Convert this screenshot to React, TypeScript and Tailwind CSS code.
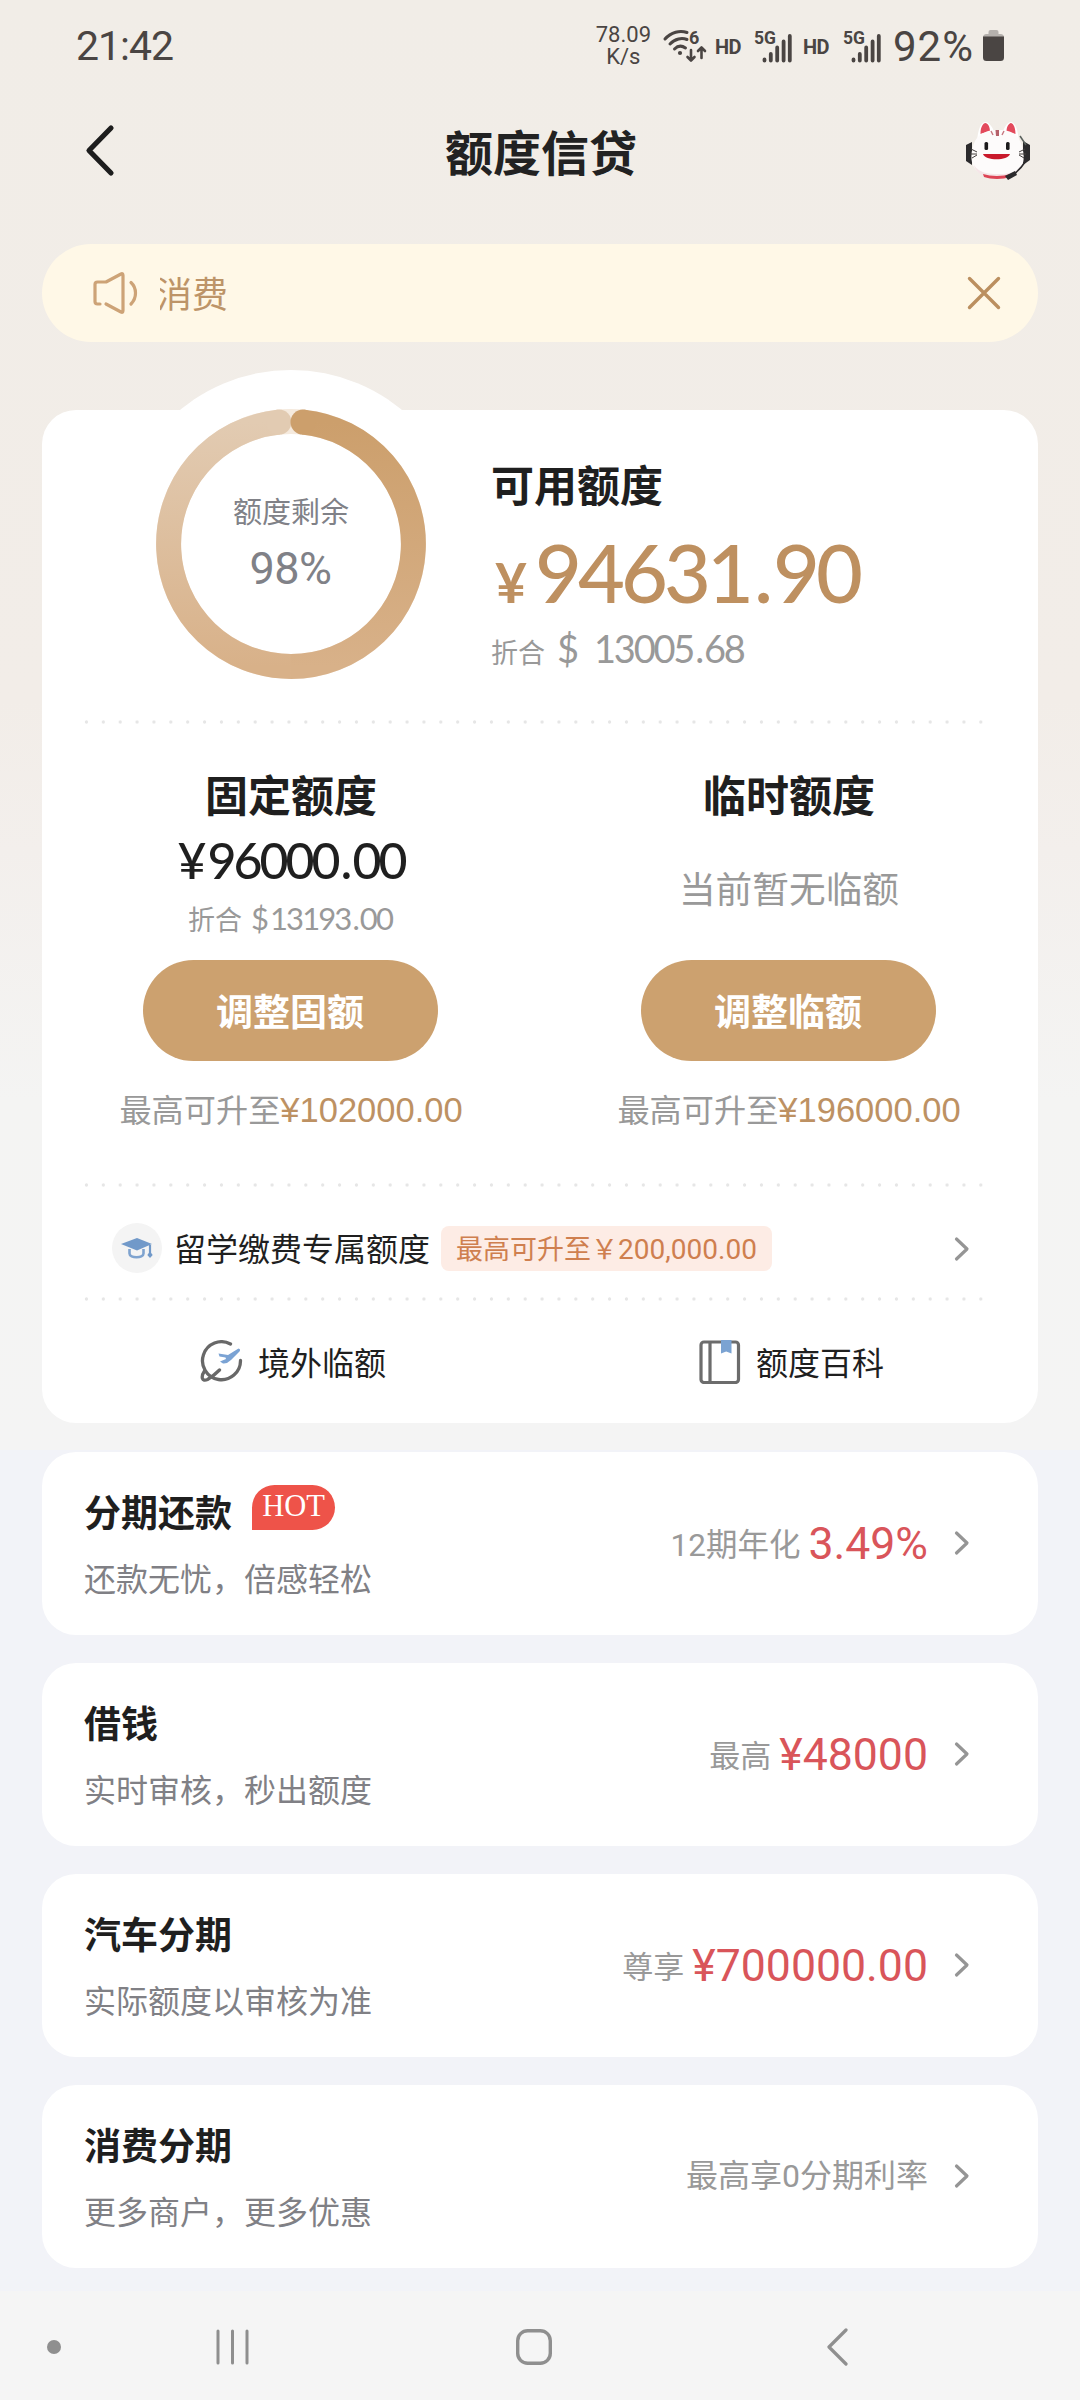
import React from 'react';

interface Offer {
  title: string;
  desc: string;
  hot?: boolean;
  label: string;
  labelClass: string;
  value?: string;
}

const offers: Offer[] = [
  { title: '分期还款', desc: '还款无忧，倍感轻松', hot: true, label: '12期年化', labelClass: 'text-[31.500px]', value: '3.49%' },
  { title: '借钱', desc: '实时审核，秒出额度', label: '最高', labelClass: 'text-[31px]', value: '¥48000' },
  { title: '汽车分期', desc: '实际额度以审核为准', label: '尊享', labelClass: 'text-[31px]', value: '¥700000.00' },
  { title: '消费分期', desc: '更多商户，更多优惠', label: '最高享0分期利率', labelClass: 'text-[32px]' },
];

const Chevron: React.FC = () => (
  <svg width="16" height="26" viewBox="0 0 16 26" fill="none" stroke="#959595" strokeWidth="3.2" strokeLinecap="round" strokeLinejoin="round">
    <path d="M2.5 3 L13 13 L2.5 23" />
  </svg>
);

const Dots: React.FC = () => (
  <div className="ml-[36px] mr-[54px] h-[4px] bg-[radial-gradient(circle,#e6e6e6_1.3px,transparent_2px)] bg-[length:16.88px_4px] bg-repeat-x" />
);

const WifiIcon: React.FC = () => (
  <svg className="overflow-visible" width="44" height="34" viewBox="0 0 44 34" fill="none" stroke="#4a4543" strokeWidth="3" strokeLinecap="round">
    <path d="M2 10 C8 3 17 1 24 3.500" />
    <path d="M7 15 C12 9.500 19 8.500 24 10.500" />
    <path d="M11.500 20 C15 16.500 19 16.500 22.500 19" />
    <circle cx="17" cy="24" r="2.100" fill="#4a4543" stroke="none" />
    <path d="M28 21 V31 M24.500 28 L28 31.500 L31.500 28" strokeWidth="2.600" strokeLinejoin="round" />
    <path d="M38.500 29 V19 M35 22 L38.500 18.500 L42 22" strokeWidth="2.600" strokeLinejoin="round" />
    <text x="26" y="15" fontSize="18" fontWeight="700" fontFamily="Roboto, sans-serif" fill="#4a4543" stroke="none">6</text>
  </svg>
);

const SignalIcon: React.FC = () => (
  <svg className="overflow-visible" width="40" height="34" viewBox="0 0 40 34" fill="none" stroke="#4a4543" strokeWidth="3.800" strokeLinecap="round">
    <text x="0" y="14" fontSize="17.500" fontWeight="700" fontFamily="Roboto, sans-serif" fill="#4a4543" stroke="none">5G</text>
    <path d="M10.500 29.500 V30.500 M16.800 24 V30.500 M23.200 17.500 V30.500 M29.600 11.500 V30.500 M35.800 6 V30.500" />
  </svg>
);

const StatusBar: React.FC = () => (
  <div className="flex h-[92px] items-center pl-[76px] pr-[76px] font-['Roboto',sans-serif] text-[#4a4543]">
    <span className="text-[41px] leading-none tracking-[-1px]">21:42</span>
    <div className="ml-auto flex items-center">
      <div className="mr-[12px] text-center text-[22px] leading-[22px]">
        78.09
        <br />
        K/s
      </div>
      <WifiIcon />
      <span className="ml-[8px] mt-[2px] w-[28px] text-[20px] font-bold leading-[24px] tracking-[-0.500px]">HD</span>
      <span className="ml-[11px] mt-[2px]"><SignalIcon /></span>
      <span className="ml-[9px] mt-[2px] w-[28px] text-[20px] font-bold leading-[24px] tracking-[-0.500px]">HD</span>
      <span className="ml-[12px] mt-[2px]"><SignalIcon /></span>
      <span className="ml-[10px] mt-[2px] w-[84px] text-[42px] leading-[50px] tracking-[1px]">92%</span>
      <svg className="ml-[6px]" width="21" height="32" viewBox="0 0 21 32">
        <rect x="5.500" y="0" width="10" height="8" rx="2" fill="#b5b1ad" />
        <rect x="0" y="4" width="21" height="10" rx="3.500" fill="#b5b1ad" />
        <path d="M0 6.500 H21 V27.500 A3.500 3.500 0 0 1 17.500 31 H3.500 A3.500 3.500 0 0 1 0 27.500 Z" fill="#4a4543" />
      </svg>
    </div>
  </div>
);

// customer service cat with a headset
const Mascot: React.FC = () => (
  <svg width="66" height="60" viewBox="0 0 66 60">
    <path d="M1 24 L7 21 V44 L1 40 Z" fill="#2b2a2c" />
    <path d="M65 24 L58 20 V44 L65 39 Z" fill="#2b2a2c" />
    <path d="M55 15 L61 24" stroke="#59605c" strokeWidth="1.500" />
    <path d="M12 21 C13 7 16 1 21 1 C25 2 28 7 30 13 Z" fill="#fff" />
    <path d="M15.500 13 C15.500 6 18 2 20.500 2 C24 3 25 7 25 11 C21 11 18 12 15.500 13 Z" fill="#e34a5c" />
    <path d="M37 13 C39 7 42 1 46.500 1 C50 2 53 8 54 21 Z" fill="#fff" />
    <path d="M41.500 11 C41.500 6 43.500 2.500 46 2 C49 2.500 50.500 8 50.500 13 C47 12 44 11 41.500 11 Z" fill="#e34a5c" />
    <path d="M10 20 C15 11 24 9 33 9 C43 9 51 11 55 20 C60 31 61 46 51 52 C42 57 24 57 15 52 C4 46 5 31 10 20 Z" fill="#fdfbfb" />
    <path d="M9 44 C14 52 23 53 33 53 C44 53 52 51 57 44 C55 50 49 55 42 56 H23 C15 54 10 50 9 44 Z" fill="#f5e6e8" />
    <path d="M18 53 C26 55.500 38 55.500 45 53 V56 C38 58.500 26 58.500 19 56 Z" fill="#dd4455" />
    <path d="M30.500 9 H34 L34 15 H31 Z" fill="#b5606a" />
    <path d="M26 10 L28 14 M39 10 L37 14" stroke="#c77780" strokeWidth="1.400" />
    <rect x="19.500" y="21" width="3.600" height="8" rx="1.500" fill="#1d1b1c" />
    <rect x="41" y="21" width="3.600" height="8" rx="1.500" fill="#1d1b1c" />
    <path d="M18 33 H45 C43 40 20 40 18 33 Z" fill="#c9192b" />
    <path d="M6 28 L12 31 M5 33 H12 M7 37 L12 34 M60 28 L54 31 M61 33 H54 M59 37 L54 34" stroke="#44403f" strokeWidth="1" />
    <path d="M60 41 C57 46 53 50 48 54" stroke="#2b2a2c" strokeWidth="1.600" fill="none" />
    <path d="M40 55 L50 50 L52 54 L43 59 Z" fill="#2b2a2c" />
  </svg>
);

const Header: React.FC = () => (
  <div className="flex h-[120px] items-center justify-between pl-[84px] pr-[49px]">
    <svg className="mt-[-2px]" width="66" height="54" viewBox="0 0 66 54" fill="none" stroke="#1d1d1d" strokeWidth="5.200" strokeLinecap="round" strokeLinejoin="round">
      <path d="M27 4 L5 26.500 L27 49" />
    </svg>
    <h1 className="mr-[33px] mt-[-5px] text-[48px] font-bold leading-none text-[#222]">额度信贷</h1>
    <span className="mt-[-3px]"><Mascot /></span>
  </div>
);

const Notice: React.FC = () => (
  <div className="mt-[32px] flex h-[98px] items-center rounded-full bg-[#fff8e7] pl-[50px] pr-[37px] text-[#bd9468]">
    <svg width="48" height="44" viewBox="0 0 48 44" fill="none" stroke="#cda377" strokeWidth="3.200" strokeLinecap="round" strokeLinejoin="round">
      <path d="M8 33 H5.500 Q3 33 3 30.500 V13.500 Q3 11 5.500 11 H14 L29 3 Q31 2 31 4.500 V39.500 Q31 42 29 41 L14 33" />
      <path d="M39 11.500 C45 17 45 27 39 33" />
    </svg>
    <div className="mb-[3px] ml-[20px] flex flex-1 overflow-hidden text-[36px] leading-[54px]">
      <span className="ml-[-4px]">消费</span>
    </div>
    <svg width="34" height="34" viewBox="0 0 34 34" stroke="#bb8f5f" strokeWidth="3.400" strokeLinecap="round">
      <path d="M2.500 2.500 L31.500 31.500 M31.500 2.500 L2.500 31.500" />
    </svg>
  </div>
);

const Ring: React.FC = () => (
  <div className="absolute left-[75px] top-[-40px] flex h-[348px] w-[348px] items-center justify-center rounded-full bg-white">
    <svg className="absolute left-[39px] top-[39px]" width="270" height="270" viewBox="0 0 270 270" fill="none" strokeWidth="25">
      <defs>
        <linearGradient id="right" x1="0" y1="0" x2="0" y2="1">
          <stop offset="0" stopColor="#cc9f6c" />
          <stop offset="1" stopColor="#d8b189" />
        </linearGradient>
        <linearGradient id="left" x1="0" y1="0" x2="0" y2="1">
          <stop offset="0" stopColor="#e2cbb2" />
          <stop offset="1" stopColor="#d8b189" />
        </linearGradient>
      </defs>
      <circle cx="135" cy="135" r="122.500" stroke="#f5eade" />
      <path d="M135 257.500 A122.500 122.500 0 0 1 123 13.100" stroke="url(#left)" />
      <path d="M147 13.100 A122.500 122.500 0 0 1 135 257.500" stroke="url(#right)" />
      <circle cx="123" cy="13.100" r="12.500" fill="#e2cbb2" stroke="none" />
      <circle cx="147" cy="13.100" r="12.500" fill="#cc9f6c" stroke="none" />
    </svg>
    <div className="relative mb-[4px] flex flex-col items-center text-[#808187]">
      <span className="text-[29px] leading-[40px]">额度剩余</span>
      <span className="mr-[1px] mt-[14px] font-['Roboto',sans-serif] text-[45px] leading-[50px] tracking-[-0.500px]">98%</span>
    </div>
  </div>
);

// amount with a widened decimal point
const Amount: React.FC<{ value: string; dotClass: string }> = ({ value, dotClass }) => {
  const [whole, cents] = value.split('.');
  return (
    <>
      {whole}
      <span className={dotClass}>.</span>
      {cents}
    </>
  );
};

const Available: React.FC = () => (
  <div className="relative h-[310px]">
    <Ring />
    <div className="flex flex-col pl-[449px] pt-[48px]">
      <h2 className="text-[43px] font-bold leading-[50px] text-[#1f1f1f]">可用额度</h2>
      <div className="mt-[22px] flex items-baseline font-['Lato',sans-serif] font-medium leading-[84px] text-[#be9060]">
        <span className="ml-[4px] w-[40px] text-[55px] font-bold">¥</span>
        <span className="text-[81px] tracking-[-4px] [font-kerning:none]">
          <Amount value="94631.90" dotClass="mx-[4px]" />
        </span>
      </div>
      <div className="flex items-baseline font-['Lato',sans-serif] leading-[48px] text-[#999]">
        <span className="w-[66px] font-['Noto_Sans_CJK_SC',sans-serif] text-[27px]">折合</span>
        <span className="w-[37px] text-[38px]">$</span>
        <span className="text-[38px] tracking-[-2.200px] [font-kerning:none]">
          <Amount value="13005.68" dotClass="mx-[2px]" />
        </span>
      </div>
    </div>
  </div>
);

interface LimitProps {
  title: string;
  button: string;
  max: string;
  children: React.ReactNode;
}

const Limit: React.FC<LimitProps> = ({ title, button, max, children }) => (
  <div className="flex w-1/2 flex-col items-center pt-[44px]">
    <h2 className="text-[43px] font-bold leading-[50px] text-[#1f1f1f]">{title}</h2>
    <div className="flex h-[142px] flex-col items-center">{children}</div>
    <button className="mr-[2px] h-[101px] w-[295px] rounded-full bg-[#cca16f] pb-[1px] text-[37px] font-bold leading-none text-white">{button}</button>
    <div className="mt-[25px] flex items-baseline text-[32.200px] leading-[44px] text-[#999]">
      最高可升至
      <span className="font-['Liberation_Sans',sans-serif] text-[34.500px] text-[#bd9163]">{max}</span>
    </div>
  </div>
);

const CreditCard: React.FC = () => (
  <div className="mt-[68px] h-[1013px] rounded-[34px] bg-white">
    <Available />
    <Dots />
    <div className="flex h-[459px]">
      <Limit title="固定额度" button="调整固额" max="¥102000.00">
        <div className="mt-[14px] font-['Lato',sans-serif] text-[50px] font-medium leading-[56px] tracking-[-3px] text-[#1f1f1f] [font-kerning:none]">
          <span className="mr-[4px]">¥</span>
          <Amount value="96000.00" dotClass="mx-[3px]" />
        </div>
        <div className="mr-[2px] mt-[10px] flex items-baseline text-[27px] leading-[40px] text-[#999]">
          折合
          <span className="ml-[9px] font-['Lato',sans-serif] text-[31px] tracking-[-1.900px] [font-kerning:none]">
            <span className="mr-[3px]">$</span>
            <Amount value="13193.00" dotClass="mx-[2px]" />
          </span>
        </div>
      </Limit>
      <Limit title="临时额度" button="调整临额" max="¥196000.00">
        <div className="mt-[44px] text-[36.700px] leading-[50px] text-[#999]">当前暂无临额</div>
      </Limit>
    </div>
    <Dots />
    <div className="flex h-[110px] items-center pl-[70px] pr-[68px] pt-[14px]">
      <div className="mb-[2px] flex h-[50px] w-[50px] items-center justify-center rounded-full bg-[#f4f4f4]">
        <svg className="mt-[2px]" width="32" height="22" viewBox="0 0 32 22" fill="none">
          <path d="M0 6 L16 0 L31 6 L16 12.500 Z" fill="#7199c9" />
          <path d="M8.500 11 V15.500 C8.500 20.500 22.500 20.500 22.500 15.500 V11" stroke="#7fa3cf" strokeWidth="2.600" />
          <path d="M29 7 V16" stroke="#7199c9" strokeWidth="2.200" />
          <path d="M29 13.500 L31.700 17 L29 20 L26.300 17 Z" fill="#7199c9" />
        </svg>
      </div>
      <span className="mb-[4px] ml-[12px] text-[32px] leading-none text-[#1f1f1f]">留学缴费专属额度</span>
      <div className="mb-[1px] ml-[11px] flex h-[45px] w-[331px] items-baseline justify-center rounded-[8px] bg-[#fdece5] text-[27px] leading-[43px] text-[#cf7f4f]">
        最高可升至￥<span className="font-['Roboto',sans-serif] text-[28px]">200,000.00</span>
      </div>
      <span className="mb-[1px] ml-auto"><Chevron /></span>
    </div>
    <Dots />
    <div className="flex h-[122px] items-center text-[32px] leading-none text-[#1f1f1f]">
      <div className="flex w-1/2 items-center pl-[158px]">
        <svg width="44" height="44" viewBox="0 0 44 44" fill="none" strokeWidth="3.300" strokeLinecap="round" strokeLinejoin="round">
          <path d="M30.500 4 A19 19 0 1 0 40.500 20.500" stroke="#686868" />
          <path d="M4.500 31 C0.500 37 2 42 7.500 39.500 C12 37 16 33.500 19.500 30" stroke="#686868" />
          <path d="M38.500 8.500 Q41 9 39.500 11.500 L31 20 Q27 24 23 23.500 L20 21.500 L26 19 L25.500 17.500 L19.500 16.500 L18.500 13.500 L28 15 Z" fill="#7ba3d4" />
        </svg>
        <span className="mb-[3px] ml-[14px]">境外临额</span>
      </div>
      <div className="flex w-1/2 items-center pl-[159px]">
        <svg width="42" height="44" viewBox="0 0 42 44" fill="none" stroke="#6c6c6c" strokeWidth="3.200">
          <rect x="2" y="2" width="37.500" height="40.500" rx="3" />
          <path d="M11 2 V42" />
          <path d="M22 0 H32.500 V13.500 L27.200 11.500 L22 13.500 Z" fill="#7ba3d2" stroke="none" />
        </svg>
        <span className="mb-[3px] ml-[15px]">额度百科</span>
      </div>
    </div>
  </div>
);

const OfferCard: React.FC<{ offer: Offer }> = ({ offer }) => (
  <div className="flex h-[183px] items-center rounded-[34px] bg-white pl-[42px] pr-[68px]">
    <div className="flex h-full flex-col pt-[35px]">
      <div className="flex h-[48px] items-center">
        <h3 className="text-[37px] font-bold leading-none text-[#1f1f1f]">{offer.title}</h3>
        {offer.hot && (
          <span className="mb-[8px] ml-[20px] flex h-[45px] w-[83px] items-center justify-center rounded-[23px] rounded-bl-none bg-[#ee5349] pb-[1px] font-['Liberation_Serif',serif] text-[30.500px] leading-none text-white">
            HOT
          </span>
        )}
      </div>
      <p className="mt-[21px] text-[32px] leading-[42px] text-[#808085]">{offer.desc}</p>
    </div>
    <div className="mb-[1px] ml-auto flex items-baseline font-['Roboto','Noto_Sans_CJK_SC',sans-serif] leading-[52px] text-[#999]">
      <span className={offer.labelClass}>{offer.label}</span>
      {offer.value && <span className="ml-[8px] translate-y-[3px] text-[44.600px] text-[#d9555a]">{offer.value}</span>}
    </div>
    <span className="mb-[1px] ml-[26px]"><Chevron /></span>
  </div>
);

const NavBar: React.FC = () => (
  <div className="mt-auto flex h-[109px] items-center bg-[#f5f5f5] pl-[47px] pt-[2px]">
    <span className="h-[14px] w-[14px] rounded-full bg-[#8f8f8f]" />
    <svg className="ml-[155px]" width="34" height="36" viewBox="0 0 34 36" stroke="#8f8f8f" strokeWidth="3" strokeLinecap="round">
      <path d="M2 2 V34 M16.500 2 V34 M31 2 V34" />
    </svg>
    <svg className="ml-[266px]" width="36" height="36" viewBox="0 0 36 36" fill="none" stroke="#8f8f8f" strokeWidth="3.400">
      <rect x="1.700" y="1.700" width="32.600" height="32.600" rx="10" />
    </svg>
    <svg className="ml-[274px]" width="24" height="38" viewBox="0 0 24 38" fill="none" stroke="#8f8f8f" strokeWidth="3.200" strokeLinecap="round" strokeLinejoin="round">
      <path d="M20 2 L3 19 L20 36" />
    </svg>
  </div>
);

export default function App() {
  return (
    <div className="flex h-[2400px] w-[1080px] flex-col overflow-hidden bg-[linear-gradient(to_bottom,#f1ede7_0px,#f2ede8_700px,#f3efec_850px,#f4f4f3_1100px,#f4f4f4_1450px,#f2f3f8_1450px)] font-['Noto_Sans_CJK_SC',sans-serif]">
      <StatusBar />
      <Header />
      <div className="px-[42px]">
        <Notice />
        <CreditCard />
        <div className="mt-[29px] flex flex-col gap-[28px]">
          {offers.map((offer) => (
            <OfferCard key={offer.title} offer={offer} />
          ))}
        </div>
      </div>
      <NavBar />
    </div>
  );
}
